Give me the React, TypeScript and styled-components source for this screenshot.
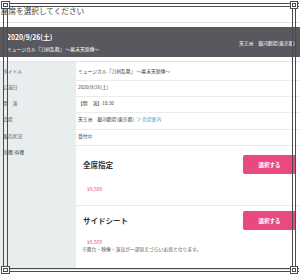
import React from "react";
import styled, { createGlobalStyle } from "styled-components";

const GlobalStyle = createGlobalStyle`
  html, body {
    margin: 0;
    padding: 0;
    background: #ffffff;
  }
  body {
    font-family: "Noto Sans CJK JP", "Noto Sans", sans-serif;
    color: #333333;
  }
`;

const PINK = "#e9497f";

const Page = styled.div`
  position: relative;
  width: 300px;
  height: 276px;
  overflow: hidden;
  background: #fff;
`;

const Heading = styled.h2`
  margin: 0;
  height: 23px;
  padding: 5px 0 0 1px;
  box-sizing: border-box;
  border-bottom: 1px solid #e2e2e2;
  font-size: 7.6px;
  line-height: 11px;
  font-weight: 400;
  color: #444;
`;

const EventBand = styled.div`
  margin-top: 4px;
  height: 30px;
  box-sizing: border-box;
  background: #58585e;
  color: #fff;
  display: flex;
  justify-content: space-between;
  align-items: center;
  padding: 0 5px 0 7px;
`;

const BandLeft = styled.div`
  display: flex;
  flex-direction: column;
  gap: 3px;
  padding-top: 1px;
`;

const BandDate = styled.div`
  font-size: 6.8px;
  line-height: 9px;
  font-weight: 700;
`;

const BandSmall = styled.div`
  font-size: 4.8px;
  line-height: 7px;
  white-space: nowrap;
`;

const InfoTable = styled.div`
  margin-top: 4px;
  border-top: 1px solid #e4e4e4;
  border-bottom: 1px solid #e4e4e4;
`;

const Row = styled.div<{ $top?: number; $h?: number }>`
  display: grid;
  grid-template-columns: 76px 1fr;
  border-bottom: 1px solid #ececec;
  &:last-child {
    border-bottom: none;
  }
  > * {
    padding-top: ${(p) => p.$top ?? 0}px;
    min-height: ${(p) => p.$h ?? 15}px;
  }
`;

const Label = styled.div`
  background: #e8eeee;
  padding-left: 3px;
  box-sizing: border-box;
  font-size: 4.8px;
  line-height: 12px;
  color: #555;
  white-space: nowrap;
`;

const Value = styled.div`
  padding-left: 2px;
  box-sizing: border-box;
  font-size: 4.8px;
  line-height: 12px;
  color: #444;
  white-space: nowrap;
  display: flex;
  align-items: flex-start;
  gap: 3px;
`;

const VenueLink = styled.a`
  color: #3aa3d8;
  text-decoration: none;
  display: inline-flex;
  align-items: center;
  gap: 1px;
  height: 12px;
`;

const TicketCell = styled.div`
  display: flex;
  flex-direction: column;
`;

const Ticket = styled.div<{ $first?: boolean }>`
  padding: ${(p) => (p.$first ? "9px 4px 12px 6px" : "5px 4px 17px 6px")};
  border-bottom: ${(p) => (p.$first ? "1px solid #ececec" : "none")};
`;

const TicketHead = styled.div`
  display: flex;
  justify-content: space-between;
  align-items: center;
  height: 19px;
`;

const TicketName = styled.div`
  font-size: 7.5px;
  font-weight: 700;
  color: #333;
  padding-left: 1px;
`;

const SelectButton = styled.button`
  width: 53px;
  height: 19px;
  border: none;
  border-radius: 2px;
  background: ${PINK};
  color: #fff;
  font-family: inherit;
  font-size: 5.5px;
  font-weight: 700;
  padding: 0;
`;

const Price = styled.div<{ $gap: number }>`
  margin-top: ${(p) => p.$gap}px;
  padding-left: 5px;
  font-size: 5px;
  line-height: 8px;
  color: ${PINK};
`;

const Note = styled.div`
  font-size: 4.8px;
  line-height: 6px;
  color: #555;
  white-space: nowrap;
`;

const FrameSvg = styled.svg`
  position: absolute;
  top: 0;
  left: 0;
  pointer-events: none;
`;

const Frame = () => (
  <FrameSvg width="300" height="276" viewBox="0 0 300 276" fill="none" stroke="#4b4b4b" strokeWidth="1">
    {/* double lines */}
    <line x1="1" y1="3.5" x2="299" y2="3.5" />
    <line x1="1" y1="6.5" x2="299" y2="6.5" />
    <line x1="1" y1="268.5" x2="299" y2="268.5" />
    <line x1="1" y1="271.5" x2="299" y2="271.5" />
    <line x1="3.5" y1="1" x2="3.5" y2="274" />
    <line x1="7.5" y1="1" x2="7.5" y2="274" />
    <line x1="292.5" y1="1" x2="292.5" y2="274" />
    <line x1="295.5" y1="1" x2="295.5" y2="274" />
    {/* corner squares */}
    <rect x="1.5" y="1.5" width="8" height="7" fill="#fff" />
    <rect x="290.5" y="1.5" width="7" height="7" fill="#fff" />
    <rect x="1.5" y="266.5" width="8" height="7" fill="#fff" />
    <rect x="290.5" y="266.5" width="7" height="7" fill="#fff" />
    <rect x="3.5" y="3.5" width="4" height="3" />
    <rect x="292.5" y="3.5" width="3" height="3" />
    <rect x="3.5" y="268.5" width="4" height="3" />
    <rect x="292.5" y="268.5" width="3" height="3" />
  </FrameSvg>
);

const Chevron = () => (
  <svg width="4" height="5" viewBox="0 0 4 5" fill="none" stroke="#3aa3d8" strokeWidth="0.8">
    <polyline points="1,0.5 3,2.5 1,4.5" />
  </svg>
);

export default function App() {
  return (
    <Page>
      <GlobalStyle />
      <Heading>座席を選択してください</Heading>

      <EventBand>
        <BandLeft>
          <BandDate>2020/9/26(土)</BandDate>
          <BandSmall>ミュージカル『刀剣乱舞』 ～幕末天狼傳～</BandSmall>
        </BandLeft>
        <BandSmall>天王洲　銀河劇場(東京都)</BandSmall>
      </EventBand>

      <InfoTable>
        <Row $top={3} $h={18}>
          <Label>タイトル</Label>
          <Value>ミュージカル『刀剣乱舞』 ～幕末天狼傳～</Value>
        </Row>
        <Row>
          <Label>公演日</Label>
          <Value>2020/9/26(土)</Value>
        </Row>
        <Row>
          <Label>開　演</Label>
          <Value>【開　演】18:30</Value>
        </Row>
        <Row $h={16}>
          <Label>会場</Label>
          <Value>
            <span>天王洲　銀河劇場(東京都)</span>
            <VenueLink href="#">
              <Chevron />
              会場案内
            </VenueLink>
          </Value>
        </Row>
        <Row>
          <Label>販売状況</Label>
          <Value>受付中</Value>
        </Row>
        <Row>
          <Label>席種/券種</Label>
          <TicketCell>
            <Ticket $first>
              <TicketHead>
                <TicketName>全席指定</TicketName>
                <SelectButton>選択する</SelectButton>
              </TicketHead>
              <Price $gap={11}>¥9,500</Price>
            </Ticket>
            <Ticket>
              <TicketHead>
                <TicketName>サイドシート</TicketName>
                <SelectButton>選択する</SelectButton>
              </TicketHead>
              <Price $gap={8}>¥9,500</Price>
              <Note>※舞台・映像・演出が一部見えづらいお席となります。</Note>
            </Ticket>
          </TicketCell>
        </Row>
      </InfoTable>

      <Frame />
    </Page>
  );
}
